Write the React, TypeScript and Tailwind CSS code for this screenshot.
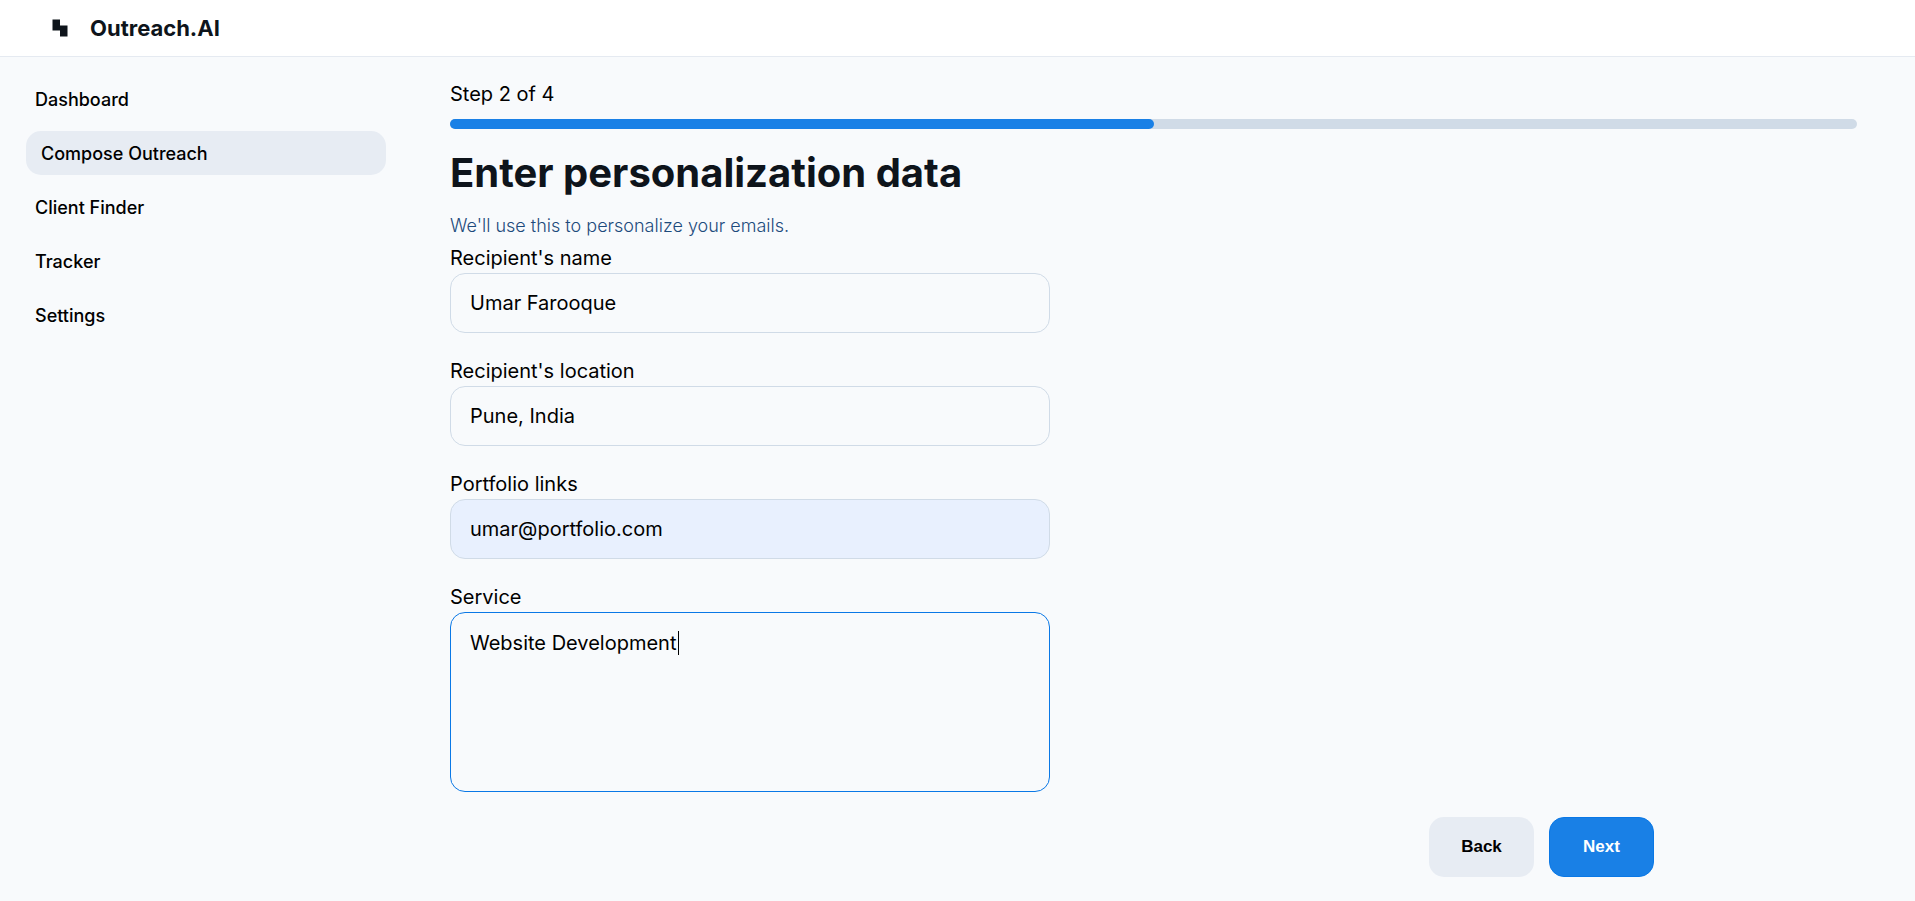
import { useState } from "react";

const navItems = ["Dashboard", "Compose Outreach", "Client Finder", "Tracker", "Settings"];

function Logo() {
  return (
    <svg viewBox="0 0 16 18" className="h-[18px] w-4" aria-hidden="true">
      <path d="M0.5 0.5h7.5v6h7.5v11H8v-6H0.5z" fill="#0e141b" />
    </svg>
  );
}

function Header() {
  return (
    <header className="flex h-[57px] items-center gap-[22px] border-b border-[#e5eaf1] bg-white px-[52px]">
      <Logo />
      <span className="text-[22px] leading-7 font-bold text-[#0e141b]">Outreach.AI</span>
    </header>
  );
}

function Sidebar() {
  return (
    <nav className="w-[386px] shrink-0 pt-5 pl-[26px]">
      <ul className="flex flex-col gap-2.5">
        {navItems.map((item) => {
          const active = item === "Compose Outreach";
          return (
            <li key={item}>
              <a
                href="#"
                aria-current={active ? "page" : undefined}
                className={
                  active
                    ? "flex h-11 items-center rounded-[15px] bg-[#e7ecf3] px-[15px] pt-0.5 text-lg font-medium"
                    : "flex h-11 items-center px-[9px] pt-0.5 text-lg font-medium"
                }
              >
                {item}
              </a>
            </li>
          );
        })}
      </ul>
    </nav>
  );
}

type FieldProps = {
  id: string;
  label: string;
  initial: string;
  filled?: boolean;
};

function Field({ id, label, initial, filled }: FieldProps) {
  const [value, setValue] = useState(initial);
  return (
    <div className="flex flex-col">
      <label htmlFor={id} className="text-xl leading-[30px]">
        {label}
      </label>
      <input
        id={id}
        type="text"
        value={value}
        onChange={(e) => setValue(e.target.value)}
        className={
          filled
            ? "h-[60px] rounded-[15px] border border-[#d0dbe7] bg-[#e8f0fe] px-[19px] text-xl outline-none focus:border-[#0a78e6]"
            : "h-[60px] rounded-[15px] border border-[#d0dbe7] bg-[#f8fafc] px-[19px] text-xl outline-none focus:border-[#0a78e6]"
        }
      />
    </div>
  );
}

function ServiceField() {
  const [value, setValue] = useState("Website Development");
  return (
    <div className="relative flex flex-col">
      <label htmlFor="service" className="text-xl leading-[30px]">
        Service
      </label>
      <textarea
        id="service"
        value={value}
        onChange={(e) => setValue(e.target.value)}
        className="h-[180px] resize-none rounded-[15px] border border-[#0a78e6] bg-[#f8fafc] px-[19px] py-[15px] text-xl leading-[30px] outline-none"
      />
      <span className="absolute top-[49px] left-[228px] h-6 w-px bg-black" />
    </div>
  );
}

export default function App() {
  return (
    <div className="min-h-screen bg-[#f8fafc] font-['Inter','Liberation_Sans',sans-serif] text-black">
      <Header />
      <div className="flex">
        <Sidebar />
        <main className="min-w-0 flex-1 pt-[22px] pr-[58px] pb-6 pl-16">
          <p className="text-xl leading-[30px]">Step 2 of 4</p>
          <div
            role="progressbar"
            aria-label="Progress"
            aria-valuenow={50}
            className="mt-2.5 h-2.5 rounded-full bg-[#d0dbe7]"
          >
            <div className="h-2.5 w-1/2 rounded-full bg-[#1980e6]" />
          </div>
          <h1 className="mt-5 text-[40px] leading-[48px] font-bold text-[#0e141b]">
            Enter personalization data
          </h1>
          <p className="mt-4 text-lg leading-[26px] font-light text-[#1d4b7c]">
            We'll use this to personalize your emails.
          </p>
          <form className="mt-1 flex w-[600px] max-w-full flex-col gap-[23px]">
            <Field id="name" label="Recipient's name" initial="Umar Farooque" />
            <Field id="location" label="Recipient's location" initial="Pune, India" />
            <Field id="portfolio" label="Portfolio links" initial="umar@portfolio.com" filled />
            <ServiceField />
          </form>
          <div className="mt-[25px] flex max-w-[1204px] justify-end gap-[15px] font-['Liberation_Sans',Arial,sans-serif] text-[17px] font-bold">
            <button type="button" className="h-[60px] w-[105px] rounded-[15px] bg-[#e7ecf3]">
              Back
            </button>
            <button
              type="button"
              className="h-[60px] w-[105px] rounded-[15px] border border-[#0a78e6] bg-[#1980e6] text-white"
            >
              Next
            </button>
          </div>
        </main>
      </div>
    </div>
  );
}
